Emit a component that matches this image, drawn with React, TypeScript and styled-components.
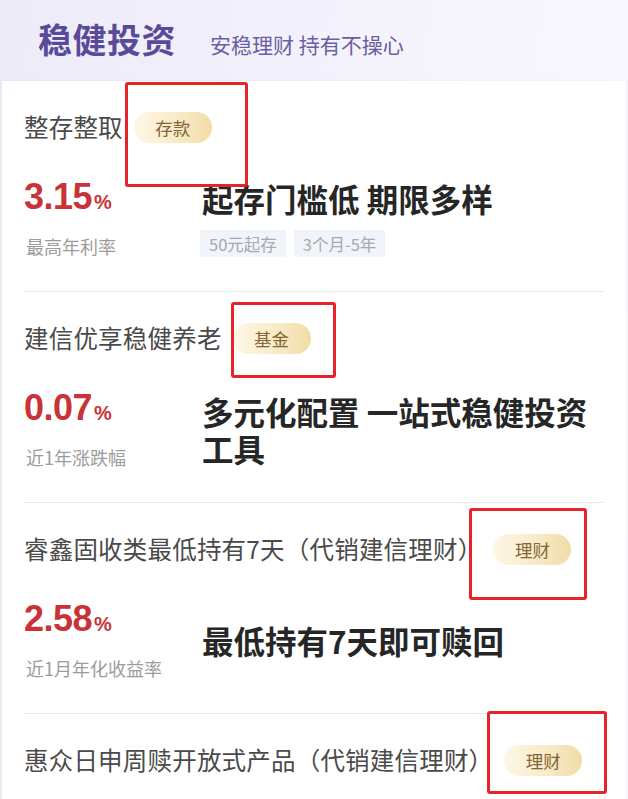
import React from "react";
import styled, { createGlobalStyle } from "styled-components";

const GlobalStyle = createGlobalStyle`
  html, body {
    margin: 0;
    padding: 0;
    background: #ffffff;
    font-family: "Noto Sans CJK SC", "Noto Sans", sans-serif;
  }
`;

type Mark = { left: number; top: number; width: number; height: number };

type Product = {
  name: string;
  tag: string;
  rate?: string;
  rateLabel?: string;
  headline?: string;
  chips?: string[];
  mark: Mark;
};

const products: Product[] = [
  {
    name: "整存整取",
    tag: "存款",
    rate: "3.15",
    rateLabel: "最高年利率",
    headline: "起存门槛低 期限多样",
    chips: ["50元起存", "3个月-5年"],
    mark: { left: -9, top: -30, width: 123, height: 105 },
  },
  {
    name: "建信优享稳健养老",
    tag: "基金",
    rate: "0.07",
    rateLabel: "近1年涨跌幅",
    headline: "多元化配置 一站式稳健投资工具",
    mark: { left: -2, top: -21, width: 105, height: 76 },
  },
  {
    name: "睿鑫固收类最低持有7天（代销建信理财）",
    tag: "理财",
    rate: "2.58",
    rateLabel: "近1月年化收益率",
    headline: "最低持有7天即可赎回",
    mark: { left: -24, top: -26, width: 118, height: 92 },
  },
  {
    name: "惠众日申周赎开放式产品（代销建信理财）",
    tag: "理财",
    mark: { left: -17, top: -34, width: 120, height: 83 },
  },
];

const App = () => {
  return (
    <Page>
      <GlobalStyle />
      <Header>
        <Title>稳健投资</Title>
        <Subtitle>安稳理财 持有不操心</Subtitle>
      </Header>
      <Card>
        {products.map((p, i) => (
          <Section key={i} last={i === products.length - 1}>
            <NameRow>
              <Name>{p.name}</Name>
              <TagWrap>
                <Tag>{p.tag}</Tag>
                <Annotation
                  style={{
                    left: p.mark.left,
                    top: p.mark.top,
                    width: p.mark.width,
                    height: p.mark.height,
                  }}
                />
              </TagWrap>
            </NameRow>
            {p.rate && (
              <Body>
                <RateCol>
                  <Rate>
                    {p.rate}
                    <Percent>%</Percent>
                  </Rate>
                  <RateLabel>{p.rateLabel}</RateLabel>
                </RateCol>
                <InfoCol>
                  <Headline>{p.headline}</Headline>
                  {p.chips && (
                    <Chips>
                      {p.chips.map((c) => (
                        <Chip key={c}>{c}</Chip>
                      ))}
                    </Chips>
                  )}
                </InfoCol>
              </Body>
            )}
          </Section>
        ))}
      </Card>
    </Page>
  );
};

export default App;

const Page = styled.div`
  width: 628px;
  height: 799px;
  overflow: hidden;
  background: linear-gradient(100deg, #eeebf9 0%, #f5f3fc 55%, #fbfaff 100%);
`;

const Header = styled.div`
  height: 81px;
  display: flex;
  align-items: center;
  padding: 0 0 0 38px;
  gap: 34px;
  box-sizing: border-box;
`;

const Title = styled.h1`
  margin: 0;
  font-size: 34px;
  font-weight: 700;
  color: #5a4a9a;
  letter-spacing: 0.5px;
  line-height: 1;
  transform: translateY(-2px);
`;

const Subtitle = styled.span`
  font-size: 21px;
  color: #6a5fa3;
  line-height: 1;
  transform: translateY(4px);
`;

const Card = styled.div`
  background: #ffffff;
  margin: 0 2px;
  padding: 0 22px;
  box-shadow: 0 0 3px rgba(0, 0, 0, 0.06);
  min-height: 718px;
`;

const Section = styled.div<{ last?: boolean }>`
  height: 211px;
  box-sizing: border-box;
  padding-top: 30px;
  border-bottom: ${(p) => (p.last ? "none" : "1.5px solid #e8e8ea")};
`;

const NameRow = styled.div`
  display: flex;
  align-items: center;
  height: 32px;
  gap: 11px;
`;

const Name = styled.span`
  font-size: 24.5px;
  letter-spacing: 0.2px;
  color: #4a4a4a;
  line-height: 32px;
  white-space: nowrap;
`;

const TagWrap = styled.div`
  position: relative;
  display: flex;
`;

const Tag = styled.span`
  width: 78px;
  height: 31px;
  border-radius: 16px;
  background: linear-gradient(90deg, #fdf7e6 0%, #f8ebc8 55%, #f1dca6 100%);
  color: #846535;
  font-size: 17.5px;
  display: flex;
  align-items: center;
  justify-content: center;
`;

const Annotation = styled.div`
  position: absolute;
  box-sizing: border-box;
  border: 3px solid #e52328;
  border-radius: 3px;
  pointer-events: none;
`;

const Body = styled.div`
  display: flex;
  align-items: center;
  margin-top: 36px;
  min-height: 78px;
`;

const RateCol = styled.div`
  width: 178px;
  flex-shrink: 0;
  display: flex;
  flex-direction: column;
  gap: 14px;
`;

const Rate = styled.div`
  font-family: "Liberation Sans", Arial, sans-serif;
  font-weight: 700;
  font-size: 36px;
  line-height: 36px;
  color: #c93237;
  letter-spacing: -0.5px;
`;

const Percent = styled.span`
  font-size: 20px;
  margin-left: 2px;
`;

const RateLabel = styled.div`
  font-size: 18px;
  line-height: 24px;
  color: #9c9c9c;
  padding-left: 2px;
`;

const InfoCol = styled.div`
  flex: 1;
  display: flex;
  flex-direction: column;
  gap: 13px;
`;

const Headline = styled.div`
  font-size: 31.5px;
  font-weight: 700;
  line-height: 37px;
  color: #262626;
`;

const Chips = styled.div`
  display: flex;
  gap: 8px;
  margin-left: -2px;
`;

const Chip = styled.span`
  background: #f1f4f8;
  color: #a3aab3;
  font-size: 16.5px;
  height: 27px;
  padding: 0 9px;
  display: flex;
  align-items: center;
`;
